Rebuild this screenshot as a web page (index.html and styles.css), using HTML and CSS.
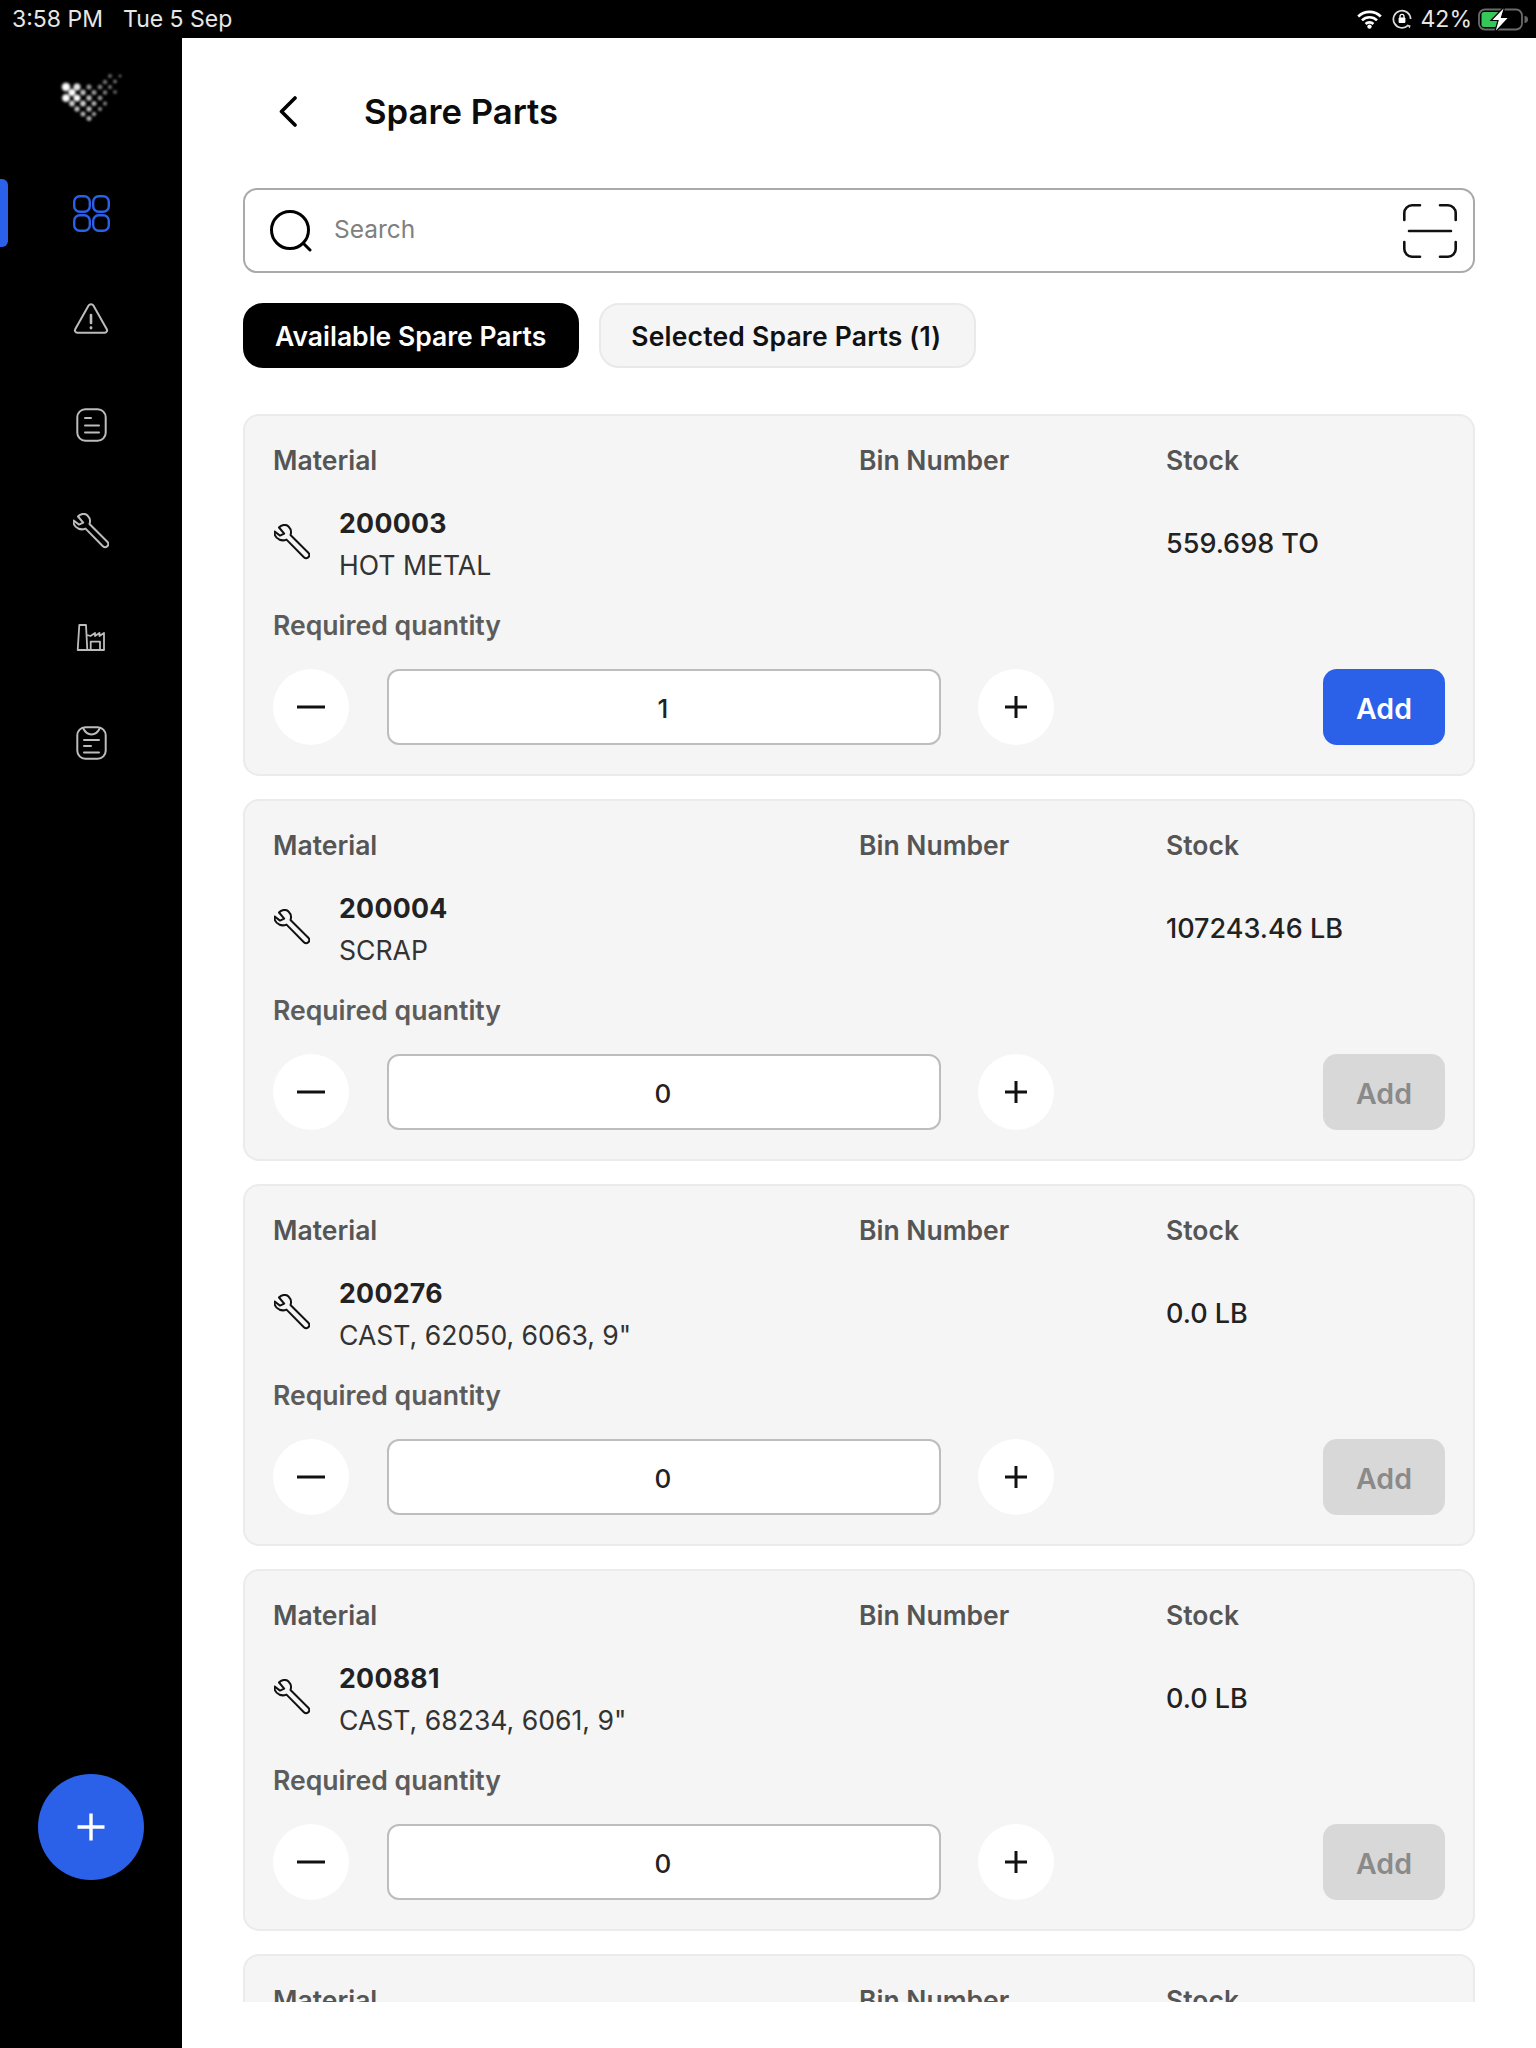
FILE: index.html
```html
<!DOCTYPE html>
<html lang="en">
<head>
<meta charset="utf-8">
<title>Spare Parts</title>
<link rel="stylesheet" href="styles.css">
</head>
<body>
<svg class="defs" width="0" height="0" aria-hidden="true">
  <defs>
    <symbol id="wrench" viewBox="0 0 36 36">
      <path d="M5 3.5C7.5.5 12 0 14.5 2.500 17 5 17.600 8 16.500 11L34.300 28.800a2.800 2.800 0 0 1-4.400 4.400L12.500 15.600C9 17 5 16 2.600 13.600.7 11.600 0 9.600.7 7.500L6 11.600 10.200 9.600Z" fill="none" stroke="currentColor" stroke-width="2" stroke-linejoin="round"/>
    </symbol>
    <radialGradient id="dot">
      <stop offset="0" stop-color="#fff"/>
      <stop offset=".55" stop-color="#eee"/>
      <stop offset="1" stop-color="#fff" stop-opacity="0"/>
    </radialGradient>
  </defs>
</svg>

<header class="status">
  <div class="status-left"><span>3:58 PM</span><span>Tue 5 Sep</span></div>
  <div class="status-right">
    <svg class="st-wifi" width="25" height="19" viewBox="0 0 25 19"><path d="M1.200 6.500a16 16 0 0 1 22.600 0M5 10.400a10.600 10.600 0 0 1 15 0M8.600 14a5.400 5.400 0 0 1 7.800 0" fill="none" stroke="#fff" stroke-width="2.600"/><circle cx="12.500" cy="16.600" r="2.200" fill="#fff"/></svg>
    <svg class="st-lock" width="20" height="20" viewBox="0 0 20 20"><path d="M16 16.400A8.600 8.600 0 1 1 18.600 10" fill="none" stroke="#ddd" stroke-width="1.700"/><path d="M15 15.500l3.600 1-1 3z" fill="#ddd"/><rect x="6.600" y="8.600" width="6.800" height="5.400" rx="1" fill="#fff"/><path d="M8 9V7.400a2 2 0 0 1 4 0V9" fill="none" stroke="#fff" stroke-width="1.300"/></svg>
    <span class="st-pct">42%</span>
    <svg class="st-batt" width="50" height="27" viewBox="0 0 50 27"><rect x="1" y="3.500" width="43" height="20" rx="6" fill="none" stroke="#6a6a6a" stroke-width="1.800"/><path d="M6 6h15v15H6a2.500 2.500 0 0 1-2.500-2.500v-10A2.500 2.500 0 0 1 6 6z" fill="#35c759"/><path d="M46.500 10a3.500 3.500 0 0 1 0 7z" fill="#666"/><path d="M27 0L13 14.500h7L16.500 27 31 11.500h-7.500z" fill="#fff" stroke="#000" stroke-width="1.200"/></svg>
  </div>
</header>

<div class="app">
  <aside class="sidebar">
    <svg class="logo" width="64" height="50" viewBox="0 0 64 50">
      <circle cx="7" cy="10" r="5.400" fill="url(#dot)"/><circle cx="18" cy="10" r="4.600" fill="url(#dot)" opacity=".9"/>
      <circle cx="13" cy="15.500" r="4.600" fill="url(#dot)"/><circle cx="7" cy="21" r="5" fill="url(#dot)"/>
      <circle cx="18" cy="21" r="4.400" fill="url(#dot)"/><circle cx="13" cy="26.500" r="3.800" fill="url(#dot)" opacity=".8"/>
      <circle cx="24" cy="15.500" r="3.600" fill="url(#dot)" opacity=".75"/><circle cx="30" cy="10" r="3.200" fill="url(#dot)" opacity=".6"/>
      <circle cx="35" cy="15.500" r="3.200" fill="url(#dot)" opacity=".6"/><circle cx="41" cy="10" r="3" fill="url(#dot)" opacity=".5"/>
      <circle cx="46" cy="5" r="2.800" fill="url(#dot)" opacity=".45"/><circle cx="51" cy="-1" r="2.600" fill="url(#dot)" opacity=".4"/>
      <circle cx="61" cy="-1" r="1.800" fill="url(#dot)" opacity=".5"/><circle cx="56" cy="4.500" r="2.400" fill="url(#dot)" opacity=".45"/>
      <circle cx="51" cy="10" r="2.600" fill="url(#dot)" opacity=".45"/><circle cx="56" cy="15" r="2.400" fill="url(#dot)" opacity=".4"/>
      <circle cx="46" cy="15.500" r="2.800" fill="url(#dot)" opacity=".5"/><circle cx="41" cy="21" r="3" fill="url(#dot)" opacity=".6"/>
      <circle cx="46" cy="26.500" r="2.600" fill="url(#dot)" opacity=".5"/><circle cx="35" cy="26.500" r="3.200" fill="url(#dot)" opacity=".7"/>
      <circle cx="30" cy="21" r="3.600" fill="url(#dot)" opacity=".75"/><circle cx="24" cy="26.500" r="3.800" fill="url(#dot)" opacity=".8"/>
      <circle cx="18" cy="32" r="3.400" fill="url(#dot)" opacity=".75"/><circle cx="30" cy="32" r="3.400" fill="url(#dot)" opacity=".75"/>
      <circle cx="24" cy="37" r="3.200" fill="url(#dot)" opacity=".7"/><circle cx="35" cy="37" r="2.800" fill="url(#dot)" opacity=".6"/>
      <circle cx="30" cy="41.500" r="3.200" fill="url(#dot)" opacity=".7"/><circle cx="41" cy="32" r="2.600" fill="url(#dot)" opacity=".55"/>
    </svg>
    <nav class="nav">
      <a class="nav-item active">
        <svg width="37" height="37" viewBox="0 0 37 37" fill="none" stroke="#2b60e8" stroke-width="2.400"><rect x="1.200" y="1.200" width="15.600" height="15.600" rx="5.500"/><rect x="20.200" y="1.200" width="15.600" height="15.600" rx="5.500"/><rect x="1.200" y="20.200" width="15.600" height="15.600" rx="5.500"/><rect x="20.200" y="20.200" width="15.600" height="15.600" rx="5.500"/></svg>
      </a>
      <a class="nav-item">
        <svg width="36" height="32" viewBox="0 0 36 32" fill="none" stroke="#bcbcbc" stroke-width="2" stroke-linecap="round" stroke-linejoin="round"><path d="M15.600 2.600a2.800 2.800 0 0 1 4.800 0l13.400 23.600a2.400 2.400 0 0 1-2.100 3.600H4.300a2.400 2.400 0 0 1-2.100-3.600z"/><path d="M18 12v8" stroke-width="2.600"/><path d="M18 24.600v.4" stroke-width="2.800"/></svg>
      </a>
      <a class="nav-item">
        <svg width="31" height="34" viewBox="0 0 31 34" fill="none" stroke="#bcbcbc" stroke-width="2" stroke-linecap="round"><rect x="1.300" y="1.300" width="28.400" height="31.400" rx="8"/><path d="M9 10h6M9 17.500h14M9 24.500h14"/></svg>
      </a>
      <a class="nav-item"><svg class="ic-wrench" width="36" height="36"><use href="#wrench"/></svg></a>
      <a class="nav-item">
        <svg width="36" height="36" viewBox="0 0 36 36" fill="none" stroke="#bcbcbc" stroke-width="1.800" stroke-linejoin="round"><path d="M4.700 31L6.300 6h6.700l1.300 25zM14.300 31h16.700V14l-4.500 3v-3l-4.500 3v-3l-4.500 3-3.400-1"/><path d="M17.700 31v-8.300H27V31"/></svg>
      </a>
      <a class="nav-item">
        <svg width="31" height="34" viewBox="0 0 31 34" fill="none" stroke="#bcbcbc" stroke-width="2" stroke-linecap="round"><rect x="1.300" y="1.300" width="28.400" height="31.400" rx="8"/><path d="M7 2c2 4 5 6.500 8.500 6.500S22 6 24 2M8 14h15M8 20h7M8 26.500h15"/></svg>
      </a>
    </nav>
    <button class="fab" type="button" aria-label="Add">
      <svg width="28" height="28" viewBox="0 0 28 28" stroke="#fff" stroke-width="3.400"><path d="M14 .5v27M.5 14h27"/></svg>
    </button>
  </aside>

  <main class="main">
    <div class="page-head">
      <svg class="back" width="18" height="31" viewBox="0 0 18 31" fill="none" stroke="#000" stroke-width="3.600" stroke-linecap="round" stroke-linejoin="round"><path d="M16 2L2.500 15.500 16 29"/></svg>
      <h1 class="title">Spare Parts</h1>
    </div>

    <div class="search">
      <svg width="42" height="42" viewBox="0 0 42 42" fill="none" stroke="#000" stroke-width="3" stroke-linecap="round"><circle cx="20" cy="20" r="18.500"/><path d="M33.500 33.500L40 40"/></svg>
      <span class="search-text">Search</span>
      <svg class="scan" width="54" height="54" viewBox="0 0 54 54" fill="none" stroke="#111" stroke-width="2.600" stroke-linecap="round"><path d="M1.300 16V9A7.700 7.700 0 0 1 9 1.300h8M37 1.300h8A7.700 7.700 0 0 1 52.700 9v7M1.300 38v7A7.700 7.700 0 0 0 9 52.700h8M37 52.700h8A7.700 7.700 0 0 0 52.700 45v-7M6 27h42"/></svg>
    </div>

    <div class="tabs">
      <button class="tab tab-on" type="button">Available Spare Parts</button>
      <button class="tab tab-off" type="button">Selected Spare Parts (1)</button>
    </div>

    <div class="list">
      <section class="card">
        <div class="row labels"><span>Material</span><span>Bin Number</span><span>Stock</span></div>
        <div class="row item">
          <div class="material"><svg class="ic-part" width="36" height="36"><use href="#wrench"/></svg><div class="mat-text"><div class="code">200003</div><div class="name">HOT METAL</div></div></div>
          <div></div>
          <div class="stock">559.698 TO</div>
        </div>
        <div class="req">Required quantity</div>
        <div class="controls">
          <button class="round" type="button" aria-label="Decrease"><svg width="30" height="30" viewBox="0 0 30 30" stroke="#111" stroke-width="3"><path d="M1 15h28"/></svg></button>
          <div class="qty">1</div>
          <button class="round" type="button" aria-label="Increase"><svg width="24" height="24" viewBox="0 0 24 24" stroke="#111" stroke-width="3"><path d="M12 1v22M1 12h22"/></svg></button>
          <button class="add" type="button">Add</button>
        </div>
      </section>

      <section class="card">
        <div class="row labels"><span>Material</span><span>Bin Number</span><span>Stock</span></div>
        <div class="row item">
          <div class="material"><svg class="ic-part" width="36" height="36"><use href="#wrench"/></svg><div class="mat-text"><div class="code">200004</div><div class="name">SCRAP</div></div></div>
          <div></div>
          <div class="stock">107243.46 LB</div>
        </div>
        <div class="req">Required quantity</div>
        <div class="controls">
          <button class="round" type="button" aria-label="Decrease"><svg width="30" height="30" viewBox="0 0 30 30" stroke="#111" stroke-width="3"><path d="M1 15h28"/></svg></button>
          <div class="qty">0</div>
          <button class="round" type="button" aria-label="Increase"><svg width="24" height="24" viewBox="0 0 24 24" stroke="#111" stroke-width="3"><path d="M12 1v22M1 12h22"/></svg></button>
          <button class="add add-off" type="button">Add</button>
        </div>
      </section>

      <section class="card">
        <div class="row labels"><span>Material</span><span>Bin Number</span><span>Stock</span></div>
        <div class="row item">
          <div class="material"><svg class="ic-part" width="36" height="36"><use href="#wrench"/></svg><div class="mat-text"><div class="code">200276</div><div class="name">CAST, 62050, 6063, 9"</div></div></div>
          <div></div>
          <div class="stock">0.0 LB</div>
        </div>
        <div class="req">Required quantity</div>
        <div class="controls">
          <button class="round" type="button" aria-label="Decrease"><svg width="30" height="30" viewBox="0 0 30 30" stroke="#111" stroke-width="3"><path d="M1 15h28"/></svg></button>
          <div class="qty">0</div>
          <button class="round" type="button" aria-label="Increase"><svg width="24" height="24" viewBox="0 0 24 24" stroke="#111" stroke-width="3"><path d="M12 1v22M1 12h22"/></svg></button>
          <button class="add add-off" type="button">Add</button>
        </div>
      </section>

      <section class="card">
        <div class="row labels"><span>Material</span><span>Bin Number</span><span>Stock</span></div>
        <div class="row item">
          <div class="material"><svg class="ic-part" width="36" height="36"><use href="#wrench"/></svg><div class="mat-text"><div class="code">200881</div><div class="name">CAST, 68234, 6061, 9"</div></div></div>
          <div></div>
          <div class="stock">0.0 LB</div>
        </div>
        <div class="req">Required quantity</div>
        <div class="controls">
          <button class="round" type="button" aria-label="Decrease"><svg width="30" height="30" viewBox="0 0 30 30" stroke="#111" stroke-width="3"><path d="M1 15h28"/></svg></button>
          <div class="qty">0</div>
          <button class="round" type="button" aria-label="Increase"><svg width="24" height="24" viewBox="0 0 24 24" stroke="#111" stroke-width="3"><path d="M12 1v22M1 12h22"/></svg></button>
          <button class="add add-off" type="button">Add</button>
        </div>
      </section>

      <section class="card">
        <div class="row labels"><span>Material</span><span>Bin Number</span><span>Stock</span></div>
      </section>
    </div>
  </main>
</div>
</body>
</html>
```

FILE: styles.css
```css
* { box-sizing: border-box; }
html, body { margin: 0; padding: 0; }
body {
  width: 1536px;
  height: 2048px;
  overflow: hidden;
  background: #000;
  font-family: Inter, "Liberation Sans", sans-serif;
  color: #222;
  display: flex;
  flex-direction: column;
}
.defs { display: block; height: 0; }

.status {
  height: 38px;
  flex: none;
  background: #000;
  color: #e6e6e6;
  display: flex;
  justify-content: space-between;
  align-items: center;
  padding: 0 8px 0 12px;
  font-size: 23px;
}
.status-left { display: flex; gap: 20px; }
.status-right { display: flex; align-items: center; }
.st-lock { margin-left: 10px; }
.st-pct { margin-left: 9px; }
.st-batt { margin-left: 6px; }

.app { flex: 1; display: flex; min-height: 0; }

.sidebar {
  width: 182px;
  flex: none;
  background: #000;
  display: flex;
  flex-direction: column;
  align-items: center;
  position: relative;
}
.logo { margin-top: 39px; overflow: visible; filter: blur(.9px) brightness(1.15); }
.nav { margin-top: 33px; display: flex; flex-direction: column; width: 100%; }
.nav-item {
  height: 106px;
  display: flex;
  align-items: center;
  justify-content: center;
  position: relative;
}
.nav-item.active::before {
  content: "";
  position: absolute;
  left: 0;
  top: 19px;
  width: 8px;
  height: 68px;
  background: #2b60e8;
  border-radius: 0 6px 6px 0;
}
.ic-wrench { color: #bcbcbc; }
.fab {
  margin-top: auto;
  margin-bottom: 168px;
  width: 106px;
  height: 106px;
  border: 0;
  border-radius: 50%;
  background: #2b60e8;
  display: flex;
  align-items: center;
  justify-content: center;
  padding: 0;
}

.main {
  flex: 1;
  min-width: 0;
  background: #fff;
  padding: 0 61px 46px;
  display: flex;
  flex-direction: column;
}
.page-head {
  height: 146px;
  margin-bottom: 4px;
  flex: none;
  display: flex;
  align-items: center;
  padding-left: 36px;
  gap: 67px;
}
.title {
  margin: 0;
  font-size: 34.7px;
  font-weight: 600;
  color: #0c0c0c;
}
.search {
  height: 85px;
  flex: none;
  border: 2px solid #aaa;
  border-radius: 14px;
  display: flex;
  align-items: center;
  padding: 0 16px 0 25px;
}
.search-text {
  margin-left: 22px;
  margin-top: -3px;
  font-size: 24.5px;
  color: #808080;
  flex: 1;
}
.tabs { display: flex; gap: 20px; margin-top: 30px; flex: none; }
.tab {
  height: 65px;
  padding: 0 31px;
  border: 2px solid #e9e9e9;
  border-radius: 20px;
  background: #f5f5f5;
  color: #111;
  font: 600 26.500px Inter, "Liberation Sans", sans-serif;
  line-height: 62px;
}
.tab-on { background: #000; border-color: #000; color: #fff; padding: 0 31px 0 30px; }
.tab-off { letter-spacing: .2px; padding: 0 33px 0 30px; }

.list {
  margin-top: 46px;
  flex: 1;
  min-height: 0;
  overflow: hidden;
  display: flex;
  flex-direction: column;
  gap: 23px;
}
.card {
  flex: none;
  height: 362px;
  background: #f5f5f5;
  border: 2px solid #ebebeb;
  border-radius: 16px;
  padding: 28px;
}
.row {
  display: grid;
  grid-template-columns: 586px 307px 1fr;
}
.labels {
  font-size: 26.500px;
  line-height: 32px;
  font-weight: 600;
  color: #555;
}
.item { margin-top: 30px; height: 76px; align-items: center; }
.material { display: flex; align-items: center; gap: 30px; }
.ic-part { color: #111; flex: none; margin: -4px 0 0 1px; }
.mat-text { display: flex; flex-direction: column; gap: 10px; margin-left: -1px; }
.code { font-size: 26.700px; line-height: 32px; font-weight: 700; letter-spacing: .3px; color: #222; }
.name { font-size: 26.600px; line-height: 32px; color: #333; }
.stock { font-size: 27px; font-weight: 500; color: #222; margin-top: -2px; }
.req {
  margin-top: 27px;
  font-size: 26.600px;
  line-height: 32px;
  font-weight: 600;
  color: #5c5c5c;
}
.controls { margin-top: 28px; height: 76px; display: flex; align-items: center; gap: 38px; }
.round {
  width: 76px;
  height: 76px;
  flex: none;
  border: 0;
  border-radius: 50%;
  background: #fff;
  display: flex;
  align-items: center;
  justify-content: center;
  padding: 0;
}
.qty {
  width: 554px;
  height: 76px;
  margin-right: -1px;
  background: #fff;
  border: 2px solid #bdbdbd;
  border-radius: 12px;
  display: flex;
  align-items: center;
  justify-content: center;
  padding: 2px 2px 0 0;
  font-size: 26px;
  font-weight: 500;
  color: #222;
}
.add {
  margin-left: auto;
  width: 122px;
  height: 76px;
  border: 0;
  border-radius: 14px;
  padding: 2px 0 0;
  background: #2b60e8;
  color: #fff;
  font: 600 28.500px Inter, "Liberation Sans", sans-serif;
}
.add-off { background: #d8d8d8; color: #8a8a8a; }
```
